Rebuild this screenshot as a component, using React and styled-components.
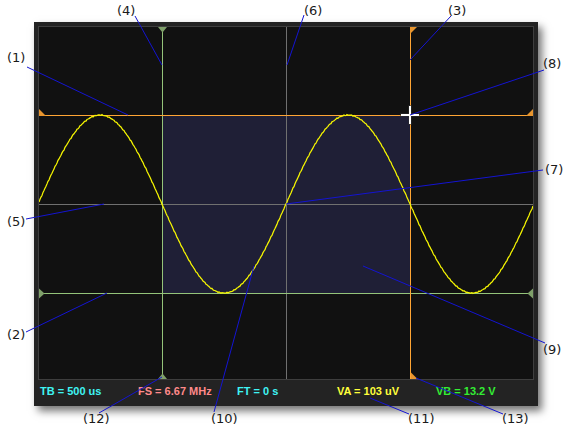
import React from "react";
import styled, { createGlobalStyle } from "styled-components";

const Global = createGlobalStyle`
  html, body { margin: 0; padding: 0; background: #ffffff; }
  body { font-family: "DejaVu Sans", sans-serif; }
`;

const Stage = styled.div`
  position: relative;
  width: 570px;
  height: 430px;
  box-sizing: border-box;
  padding: 22px 0 0 34px;
  background: #ffffff;
  overflow: hidden;
`;

const Scope = styled.div`
  width: 504px;
  height: 384px;
  box-sizing: border-box;
  padding: 4px 4px 0 4px;
  background: #232323;
  display: flex;
  flex-direction: column;
  box-shadow: 4px 5px 8px rgba(0, 0, 0, 0.55);
`;

const Plot = styled.div`
  width: 496px;
  height: 354px;
  box-sizing: border-box;
  border: 1px solid #3e3e3e;
  background: #111111;
  display: flex;
`;

const PlotSvg = styled.svg`
  display: block;
  width: 494px;
  height: 352px;
`;

const StatusBar = styled.div`
  height: 26px;
  box-sizing: border-box;
  padding-left: 2px;
  display: grid;
  grid-template-columns: 98px 99px 100px 99px 1fr;
  align-items: start;
  font-family: "Liberation Sans", Arial, sans-serif;
  font-weight: bold;
  font-size: 11px;
  line-height: 23px;
  white-space: nowrap;
`;

const Reading = styled.span`
  color: ${(p) => p.$color};
`;

const Overlay = styled.svg`
  position: absolute;
  left: 0;
  top: 0;
  width: 570px;
  height: 430px;
  pointer-events: none;
`;

const Label = styled.span`
  position: absolute;
  font-family: "DejaVu Sans", sans-serif;
  font-size: 13px;
  line-height: 13px;
  color: #1a1a1a;
  white-space: nowrap;
`;

const GREEN = "#94c47a";
const GREEN_TRI = "#7fa06a";
const ORANGE = "#ffa534";
const ORANGE_TRI = "#e8952e";
const GRAY = "#707070";

function wavePath() {
  const pts = [];
  for (let x = 39; x <= 533; x += 1) {
    const noise =
      0.55 * Math.sin(x * 12.9898 + 78.233) * Math.cos(x * 4.1414 + 1.7);
    const y = 204 - 89 * Math.cos((2 * Math.PI * (x - 100)) / 248) + noise;
    pts.push(`${x === 39 ? "M" : "L"}${x.toFixed(1)} ${y.toFixed(2)}`);
  }
  return pts.join(" ");
}

const WAVE = wavePath();

const readings = [
  { text: "TB = 500 us", color: "#3ff4f4" },
  { text: "FS = 6.67 MHz", color: "#ff8a8a" },
  { text: "FT = 0 s", color: "#3ff4f4" },
  { text: "VA = 103 uV", color: "#ffff3a" },
  { text: "VB = 13.2 V", color: "#33ee33" },
];

const callouts = [
  { n: "(1)", left: 7, top: 51, line: [27, 67, 128, 115] },
  { n: "(2)", left: 7, top: 328, line: [26, 332, 107, 293] },
  { n: "(3)", left: 448, top: 4, line: [451, 16, 410, 60] },
  { n: "(4)", left: 117, top: 4, line: [135, 16, 162, 65] },
  { n: "(5)", left: 7, top: 215, line: [26, 219, 104, 204] },
  { n: "(6)", left: 304, top: 4, line: [304, 15, 287, 65] },
  { n: "(7)", left: 545, top: 163, line: [543, 170, 286, 204] },
  { n: "(8)", left: 543, top: 57, line: [544, 70, 410, 115] },
  { n: "(9)", left: 543, top: 343, line: [363, 266, 545, 343] },
  { n: "(10)", left: 211, top: 412, line: [254, 266, 214, 412] },
  { n: "(11)", left: 408, top: 412, line: [370, 398, 409, 414] },
  { n: "(12)", left: 83, top: 412, line: [99, 413, 162, 377] },
  { n: "(13)", left: 502, top: 412, line: [416, 378, 503, 414] },
];

function ScopePlot() {
  return (
    <PlotSvg viewBox="39 27 494 352" shapeRendering="auto">
      <rect x="163" y="116" width="247" height="177" fill="#1f1f36" />
      <g shapeRendering="crispEdges" strokeWidth="1">
        <line x1="39" y1="204.5" x2="533" y2="204.5" stroke={GRAY} />
        <line x1="286.5" y1="27" x2="286.5" y2="379" stroke={GRAY} />
        <line x1="162.5" y1="27" x2="162.5" y2="379" stroke={GREEN} />
        <line x1="39" y1="293.5" x2="533" y2="293.5" stroke={GREEN} />
        <line x1="39" y1="115.5" x2="533" y2="115.5" stroke={ORANGE} />
        <line x1="410.5" y1="27" x2="410.5" y2="379" stroke={ORANGE} />
      </g>
      <path d={WAVE} fill="none" stroke="#f6f600" strokeWidth="1.25" />
      <polygon points="158,27 167,27 162.5,32.5" fill={GREEN_TRI} />
      <polygon points="158,379 167,379 162.5,373.5" fill={GREEN_TRI} />
      <polygon points="39,288.5 39,298.5 44.5,293.5" fill={GREEN_TRI} />
      <polygon points="533,288.5 533,298.5 527.5,293.5" fill={GREEN_TRI} />
      <polygon points="410,27 417,27 410,34" fill={ORANGE_TRI} />
      <polygon points="411,372.5 411,379 417.5,379" fill={ORANGE_TRI} />
      <polygon points="39,109 39,116 46,116" fill={ORANGE_TRI} />
      <polygon points="533,109 533,116 526,116" fill={ORANGE_TRI} />
      <g shapeRendering="crispEdges">
        <rect x="400" y="113" width="20" height="4" fill="#303030" opacity="0.5" />
        <rect x="408" y="105" width="4" height="20" fill="#303030" opacity="0.5" />
        <rect x="401" y="114" width="18" height="2" fill="#ffffff" />
        <rect x="409" y="106" width="2" height="18" fill="#ffffff" />
      </g>
    </PlotSvg>
  );
}

export default function App() {
  return (
    <>
      <Global />
      <Stage>
        <Scope>
          <Plot>
            <ScopePlot />
          </Plot>
          <StatusBar>
            {readings.map((r) => (
              <Reading key={r.text} $color={r.color}>
                {r.text}
              </Reading>
            ))}
          </StatusBar>
        </Scope>
        <Overlay viewBox="0 0 570 430">
          {callouts.map((c) => (
            <line
              key={c.n}
              x1={c.line[0]}
              y1={c.line[1]}
              x2={c.line[2]}
              y2={c.line[3]}
              stroke="#1414d2"
              strokeWidth="1"
            />
          ))}
        </Overlay>
        {callouts.map((c) => (
          <Label key={c.n} style={{ left: c.left, top: c.top }}>
            {c.n}
          </Label>
        ))}
      </Stage>
    </>
  );
}
